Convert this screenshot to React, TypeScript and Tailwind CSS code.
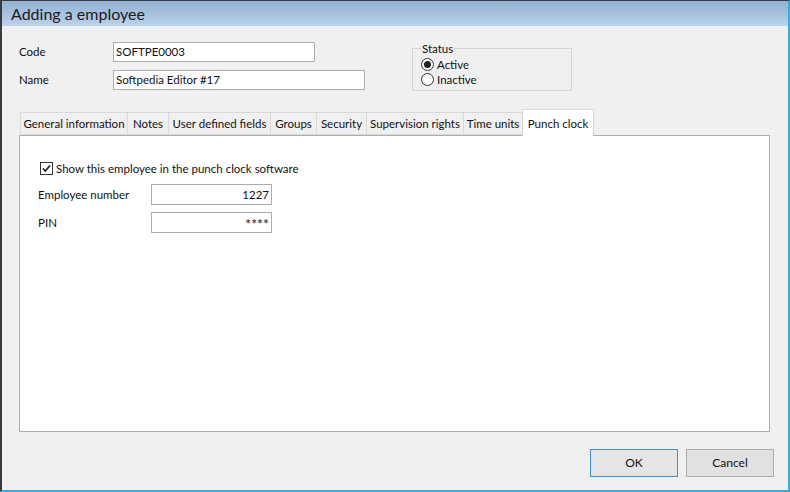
import React from "react";

const tabs = [
  { label: "General information", w: "w-[108px]" },
  { label: "Notes", w: "w-[42px]" },
  { label: "User defined fields", w: "w-[103px]" },
  { label: "Groups", w: "w-[47px]" },
  { label: "Security", w: "w-[51px]" },
  { label: "Supervision rights", w: "w-[98px]" },
  { label: "Time units", w: "w-[60px]" },
];

function Radio({ checked, label }: { checked?: boolean; label: string }) {
  return (
    <div className="flex items-center h-[15px] leading-[15px]">
      <span className="w-[13px] h-[13px] rounded-full border border-[#333] bg-white flex items-center justify-center">
        {checked && <span className="w-[7px] h-[7px] rounded-full bg-[#222]" />}
      </span>
      <span className="ml-[3px]">{label}</span>
    </div>
  );
}

export default function App() {
  return (
    <div
      className="w-[790px] h-[492px] flex flex-col bg-[#f0f0f0] border-l-2 border-t border-[#3a3a3a] border-r-2 border-r-[#27b2ea] border-b-2 border-b-[#27b2ea] text-[11.5px] text-[#111]"
      style={{ fontFamily: 'Lato, "Noto Sans", sans-serif' }}
    >
      <div className="h-[25px] shrink-0 bg-gradient-to-b from-[#93b0d1] to-[#bbd3eb] flex items-center pl-[9px] text-[16px] text-[#1b1b1b]">
        Adding a employee
      </div>

      <div className="flex-1 flex flex-col pl-[17px] pr-[14px]">
        {/* top fields */}
        <div className="flex mt-[16px]">
          <div className="w-[393px] flex flex-col gap-[8px]">
            <div className="flex items-center h-[20px]">
              <span className="w-[94px]">Code</span>
              <div className="w-[202px] h-[20px] border border-[#abadb3] bg-white flex items-center px-[2px]">
                SOFTPE0003
              </div>
            </div>
            <div className="flex items-center h-[20px]">
              <span className="w-[94px]">Name</span>
              <div className="w-[252px] h-[20px] border border-[#abadb3] bg-white flex items-center px-[2px]">
                Softpedia Editor #17
              </div>
            </div>
          </div>
          <div className="relative mt-[6px] w-[160px] h-[43px] border border-[#d5d5d5] pl-[8px] pt-[8px] flex flex-col">
            <span className="absolute -top-[8px] left-[8px] bg-[#f0f0f0] px-[1px] leading-[16px]">
              Status
            </span>
            <Radio checked label="Active" />
            <Radio label="Inactive" />
          </div>
        </div>

        {/* tabs */}
        <div className="flex items-end mt-[18px] ml-[1px] h-[26px] relative z-10">
          {tabs.map((t, i) => (
            <div
              key={t.label}
              className={`${t.w} h-[23px] border border-[#d9d9d9] bg-[#f0f0f0] flex items-center justify-center whitespace-nowrap ${i > 0 ? "-ml-px" : ""}`}
            >
              {t.label}
            </div>
          ))}
          <div className="w-[72px] h-[27px] -ml-px -mb-px border border-b-0 border-[#d9d9d9] bg-white flex items-start justify-center pt-[5px] whitespace-nowrap">
            Punch clock
          </div>
        </div>

        <div className="w-[751px] h-[297px] border border-[#adadad] bg-white flex flex-col pl-[18px] pt-[25px]">
          <div className="flex items-center h-[15px]">
            <span className="ml-[2px] w-[13px] h-[13px] border border-[#333] bg-white flex items-center justify-center">
              <svg width="11" height="11" viewBox="0 0 11 11">
                <path d="M2 5.5 L4.3 8 L9 2.5" fill="none" stroke="#222" strokeWidth="1.8" />
              </svg>
            </span>
            <span className="ml-[3px]">Show this employee in the punch clock software</span>
          </div>
          <div className="flex items-center mt-[8px] h-[21px]">
            <span className="w-[113px]">Employee number</span>
            <div className="w-[121px] h-[21px] border border-[#abadb3] bg-white flex items-center justify-end px-[2px]">
              1227
            </div>
          </div>
          <div className="flex items-center mt-[7px] h-[21px]">
            <span className="w-[113px]">PIN</span>
            <div className="w-[121px] h-[21px] border border-[#abadb3] bg-white flex items-end justify-end px-[2px] text-[#6b3e1a] font-bold text-[14px] leading-[16px]">
              ****
            </div>
          </div>
        </div>

        <div className="flex justify-end gap-[8px] mt-[17px]">
          <button className="w-[88px] h-[28px] border border-[#3c8fe0] bg-[#e5e5e5] text-[12px]">
            OK
          </button>
          <button className="w-[88px] h-[28px] border border-[#adadad] bg-[#e1e1e1] text-[12px]">
            Cancel
          </button>
        </div>
      </div>
    </div>
  );
}
